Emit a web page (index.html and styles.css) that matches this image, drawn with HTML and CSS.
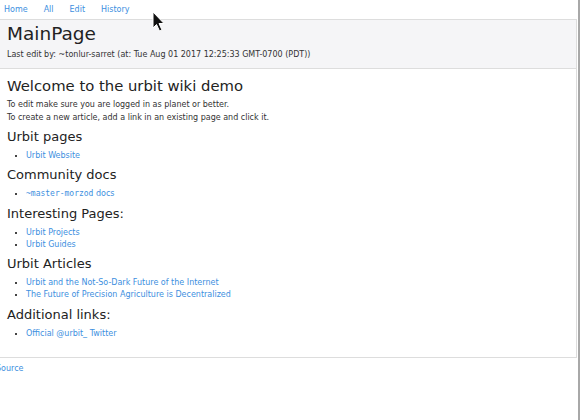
FILE: index.html
```html
<!DOCTYPE html>
<html>
<head>
<meta charset="utf-8">
<link rel="stylesheet" href="styles.css">
</head>
<body>
<div class="page">
  <nav class="nav">
    <a href="#">Home</a>
    <a href="#">All</a>
    <a href="#">Edit</a>
    <a href="#">History</a>
  </nav>
  <div class="box">
    <header class="head">
      <h1 class="title">MainPage</h1>
      <div class="meta">Last edit by: ~tonlur-sarret (at: Tue Aug 01 2017 12:25:33 GMT-0700 (PDT))</div>
    </header>
    <main class="content">
      <h1 class="h1">Welcome to the urbit wiki demo</h1>
      <p class="p">To edit make sure you are logged in as planet or better.<br>To create a new article, add a link in an existing page and click it.</p>
      <h2 class="h2">Urbit pages</h2>
      <ul class="list"><li><a href="#">Urbit Website</a></li></ul>
      <h2 class="h2">Community docs</h2>
      <ul class="list"><li><a href="#"><code class="mono">~master-morzod</code> docs</a></li></ul>
      <h2 class="h2">Interesting Pages:</h2>
      <ul class="list"><li><a href="#">Urbit Projects</a></li><li><a href="#">Urbit Guides</a></li></ul>
      <h2 class="h2">Urbit Articles</h2>
      <ul class="list"><li><a href="#">Urbit and the Not-So-Dark Future of the Internet</a></li><li><a href="#">The Future of Precision Agriculture is Decentralized</a></li></ul>
      <h2 class="h2">Additional links:</h2>
      <ul class="list"><li><a href="#">Official @urbit_ Twitter</a></li></ul>
    </main>
  </div>
  <div class="foot"><a href="#">Source</a></div>
</div>
<svg class="cursor" width="14" height="22" viewBox="0 0 14 22"><path d="M1 1 L1 17 L4.5 13.5 L7.5 20 L10 19 L7 12.5 L12 12.5 Z" fill="#111" stroke="#fff" stroke-width="1"/></svg>
</body>
</html>
```
FILE: styles.css
```css
html, body { margin: 0; padding: 0; background: #fff; }
body {
  font-family: "DejaVu Sans", sans-serif;
  color: #333;
  font-size: 8px;
  width: 580px;
  height: 420px;
  overflow: hidden;
  position: relative;
}
a { color: #3d8fe0; text-decoration: none; }
.page { width: 578px; height: 420px; border-right: 2px solid #a8a8a8; }
.nav { display: flex; gap: 16px; padding-left: 4px; height: 19px; align-items: center; line-height: 12px; }
.nav a { font-size: 8px; }
.box { width: 576px; border: 1px solid #ddd; border-left: none; }
.head { background: #f5f5f7; border-bottom: 1px solid #ddd; padding: 2px 7px 7px; }
.title { margin: 0; font-size: 18.5px; font-weight: normal; line-height: 24px; color: #222; }
.meta { margin-top: 3px; line-height: 12px; font-size: 8px; color: #333; }
.content { padding: 8px 7px 17px; }
.h1 { margin: 0; font-size: 14.8px; font-weight: normal; line-height: 18px; color: #222; }
.p { margin: 3px 0 -1px; line-height: 13px; font-size: 8px; }
.h2 { margin: 5.5px 0 0; font-size: 13px; font-weight: normal; line-height: 16px; color: #222; }
.list { margin: 5px 0 0; padding-left: 19px; list-style: square; line-height: 12px; font-size: 8px; }
.list li::marker { color: #444; font-size: 6px; }
.mono { font-family: "DejaVu Sans Mono", monospace; font-size: 8px; }
.foot { margin-left: -4px; margin-top: 5px; line-height: 12px; font-size: 8px; }
.cursor { position: absolute; left: 152px; top: 11px; }
```
